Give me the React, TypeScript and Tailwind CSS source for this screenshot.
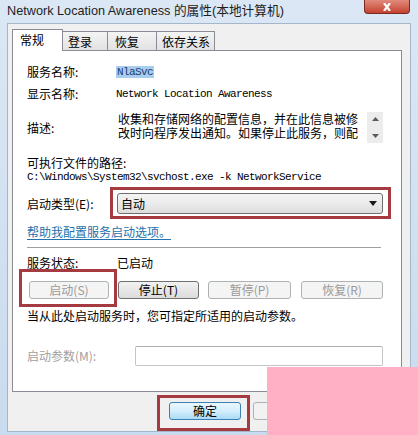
import React from 'react';

const cjk = "font-['Noto_Sans_CJK_SC',sans-serif]";
const mono = "font-['Liberation_Mono','Noto_Sans_CJK_SC',monospace] text-[11px] tracking-[-0.6px]";

const Tab: React.FC<{ label: string; active?: boolean; w: string; pl: string }> = ({ label, active, w, pl }) =>
  active ? (
    <div className={`${w} ${pl} relative z-10 -mb-px h-[22px] border border-b-0 border-[#898c95] bg-white pt-[3px] text-[12px] leading-[14px] text-black`}>
      {label}
    </div>
  ) : (
    <div className={`${w} ${pl} h-[19px] border border-b-0 border-l-0 border-[#898c95] bg-gradient-to-b from-[#f4f4f4] to-[#e2e2e2] pt-[3px] text-[12px] leading-[14px] text-black`}>
      {label}
    </div>
  );

const Btn: React.FC<{ label: string; w: string; ml: string; disabled?: boolean }> = ({ label, w, ml, disabled }) => (
  <div
    className={`${w} ${ml} flex h-[18px] items-center justify-center rounded-[3px] border text-[12px] leading-none ${
      disabled
        ? 'border-[#adb2b5] bg-[#f4f4f4] text-[#9a9a9a]'
        : 'border-[#707070] bg-gradient-to-b from-[#f2f2f2] to-[#dcdcdc] text-black'
    }`}
  >
    {label}
  </div>
);

export default function App() {
  return (
    <div className={`relative h-[435px] w-[418px] overflow-hidden bg-gradient-to-b from-[#dbe7f4] to-[#c9dbee] ${cjk}`}>
      {/* title bar */}
      <div className="flex h-[23px] items-start">
        <div className="pl-[7px] pt-[2px] font-['Liberation_Sans','Noto_Sans_CJK_SC',sans-serif] text-[12.7px] leading-[18px] text-[#1e1e1e]">
          Network Location Awareness 的属性(本地计算机)
        </div>
        <div className="ml-auto mr-[8px] flex h-[14px] w-[46px] items-center justify-center rounded-b-[4px] border border-t-0 border-[#7a2a22] bg-gradient-to-b from-[#e08a7c] to-[#c4412f]">
          <svg width="10" height="8" viewBox="0 0 10 8">
            <path d="M2 0 L8 8 M8 0 L2 8" stroke="white" strokeWidth="2.2" />
          </svg>
        </div>
      </div>

      {/* dialog body */}
      <div className="mx-[7px] h-[409px] border border-[#a4b6ca] bg-[#f0f0f0] pl-[4px] pt-[6px]">
        <div className="flex h-[20px] items-end">
          <Tab label="常规" active w="w-[51px]" pl="pl-[7px]" />
          <Tab label="登录" w="w-[45px]" pl="pl-[5px]" />
          <Tab label="恢复" w="w-[49px]" pl="pl-[7px]" />
          <Tab label="依存关系" w="w-[58px]" pl="pl-[5px]" />
        </div>

        <div className="flex h-[342px] w-[390px] flex-col border border-[#898c95] bg-white pl-[14px] text-[12px] leading-[12px] text-black">
          {/* service name */}
          <div className="mt-[13px] flex h-[16px] items-center">
            <div className="w-[89px]">服务名称:</div>
            <div className={`${mono} bg-[#a9cdef] px-px leading-[12px] text-[#1b3a6b]`}>NlaSvc</div>
          </div>
          <div className="mt-[6px] flex h-[16px] items-center">
            <div className="w-[89px]">显示名称:</div>
            <div className={mono}>Network Location Awareness</div>
          </div>
          {/* description */}
          <div className="mt-[10px] flex h-[31px] items-center">
            <div className="w-[88px]">描述:</div>
            <div className="flex h-[31px] w-[268px]">
              <div className="flex-1 pl-[3px]">
                <div className="w-[242px] break-all text-[12px] leading-[14px]">
                  收集和存储网络的配置信息，并在此信息被修改时向程序发出通知。如果停止此服务，则配
                </div>
              </div>
              <div className="flex w-[16px] flex-col items-center justify-between bg-[#ececec] py-[5px]">
                <svg width="7" height="4" viewBox="0 0 7 4"><path d="M0 4 L3.5 0 L7 4Z" fill="#5a5a5a" /></svg>
                <svg width="7" height="4" viewBox="0 0 7 4"><path d="M0 0 L3.5 4 L7 0Z" fill="#5a5a5a" /></svg>
              </div>
            </div>
          </div>
          {/* path */}
          <div className="mt-[14px] h-[12px]">可执行文件的路径:</div>
          <div className={`${mono} mt-[2px] h-[12px] leading-[12px]`}>
            C:\Windows\System32\svchost.exe -k NetworkService
          </div>
          {/* startup type */}
          <div className="mt-[10px] flex h-[21px] items-center">
            <div className="w-[90px]">启动类型(E):</div>
            <div className="flex h-[21px] w-[266px] items-center justify-between rounded-[3px] border border-[#707070] bg-gradient-to-b from-[#f4f4f4] via-[#ebebeb] to-[#dddddd] pl-[3px] pr-[5px]">
              <span>自动</span>
              <svg width="8" height="5" viewBox="0 0 8 5"><path d="M0 0 L8 0 L4 5Z" fill="#1a1a1a" /></svg>
            </div>
          </div>
          <div className="mt-[12px] h-[12px] text-[#2371ad] underline decoration-[#2371ad] underline-offset-2">
            帮助我配置服务启动选项。
          </div>
          <div className="mt-[9px] h-px w-[354px] bg-[#a0a0a0]" />
          <div className="mt-[9px] flex h-[12px] items-center">
            <div className="w-[90px]">服务状态:</div>
            <div>已启动</div>
          </div>
          {/* buttons */}
          <div className="mt-[12px] flex">
            <Btn label="启动(S)" w="w-[80px]" ml="ml-[2px]" disabled />
            <Btn label="停止(T)" w="w-[81px]" ml="ml-[9px]" />
            <Btn label="暂停(P)" w="w-[83px]" ml="ml-[9px]" disabled />
            <Btn label="恢复(R)" w="w-[82px]" ml="ml-[10px]" disabled />
          </div>
          <div className="mt-[11px] h-[12px]">当从此处启动服务时，您可指定所适用的启动参数。</div>
          <div className="mt-[24px] flex h-[20px] items-center">
            <div className="w-[108px] text-[#a0a0a0]">启动参数(M):</div>
            <div className="h-[20px] w-[248px] rounded-[2px] border border-[#c5c5c5] border-t-[#abadb3] bg-white" />
          </div>
        </div>

        {/* dialog buttons */}
        <div className="mt-[10px] flex">
          <div className="ml-[157px] flex h-[18px] w-[72px] items-center justify-center rounded-[3px] border border-[#3c7fb1] bg-gradient-to-b from-[#eaf6fd] via-[#d5eefb] to-[#a9dbf6] text-[12px] leading-none text-black">
            确定
          </div>
          <div className="ml-[12px] flex h-[18px] w-[72px] items-center justify-center rounded-[3px] border border-[#adb2b5] bg-[#f2f2f2] text-[12px] leading-none text-black">
            取消
          </div>
        </div>
      </div>

      {/* annotation highlights */}
      <div className="absolute left-[110px] top-[187px] h-[32px] w-[281px] border-[3px] border-[#a53a40]" />
      <div className="absolute left-[19px] top-[269px] h-[38px] w-[98px] border-[3px] border-[#a53a40]" />
      <div className="absolute left-[157px] top-[395px] h-[36px] w-[93px] border-[3px] border-[#a53a40]" />
      {/* pink cover */}
      <div className="absolute left-[267px] top-[367px] h-[68px] w-[151px] bg-[#ffb0c4]" />
    </div>
  );
}
